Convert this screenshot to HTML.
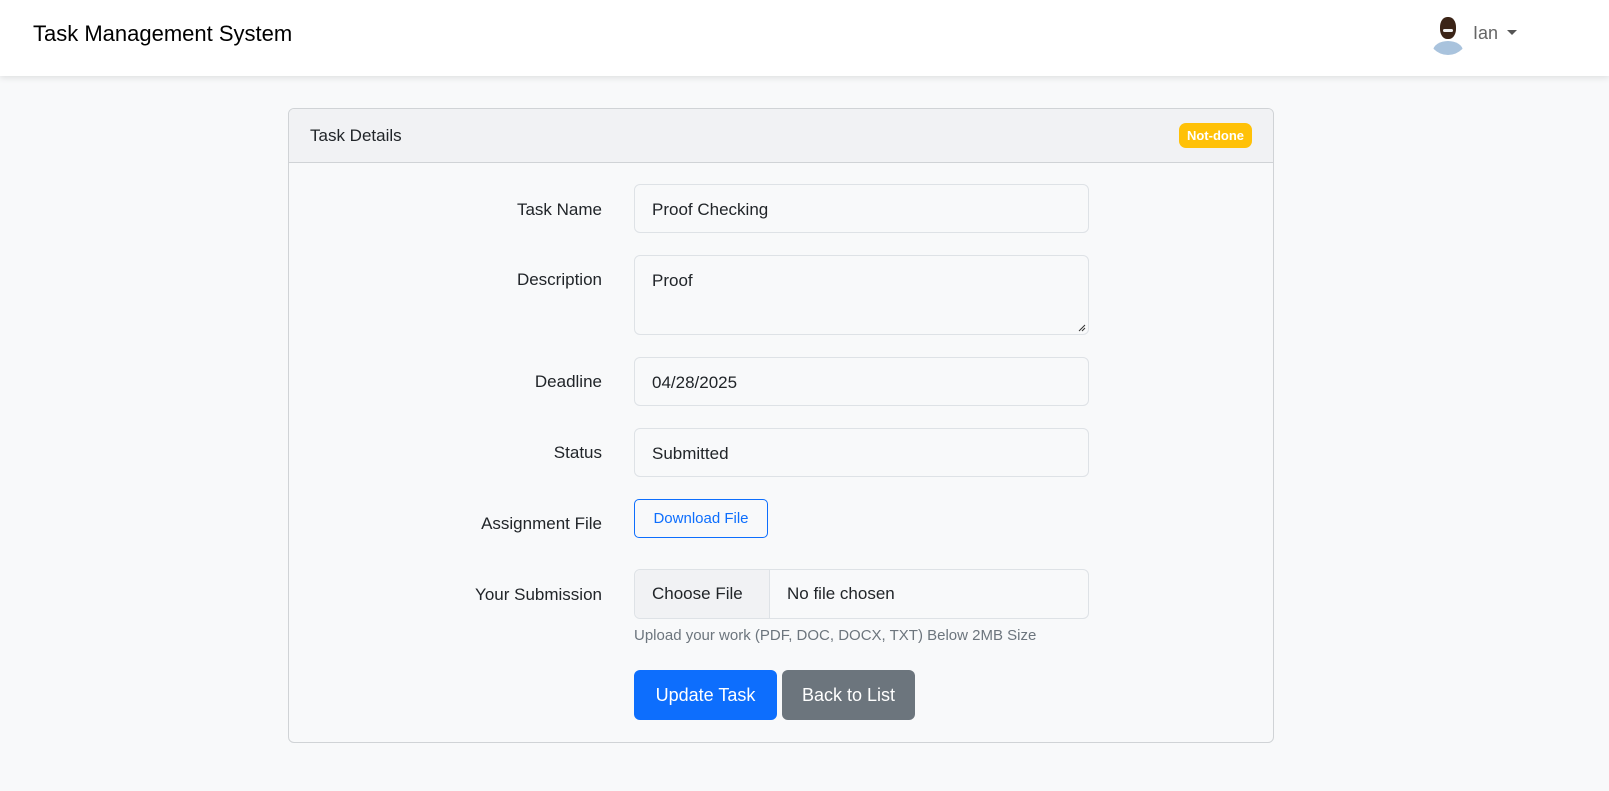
<!DOCTYPE html>
<html><head><style>
*{box-sizing:border-box;margin:0;padding:0}
body{width:1609px;height:791px;background:#f8f9fa;font-family:"Liberation Sans",sans-serif;color:#212529;position:relative;overflow:hidden}
.nav{position:absolute;left:0;top:0;width:1609px;height:76px;background:#fff;box-shadow:0 2px 6px rgba(0,0,0,.1)}
.brand{position:absolute;left:33px;top:21px;font-size:22px;color:#000}
.av{position:absolute;left:1428px;top:15px;width:40px;height:40px;border-radius:50%;overflow:hidden;background:#fff}
.av i{position:absolute;display:block}
.user{position:absolute;left:1473px;top:23px;font-size:18px;color:#666}
.caret{position:absolute;left:1507px;top:30px;border-left:5px solid transparent;border-right:5px solid transparent;border-top:5px solid #555}
.card{position:absolute;left:288px;top:108px;width:986px;height:635px;border:1px solid #d0d3d6;border-radius:6px;background:#f8f9fa;overflow:hidden}
.hd{height:54px;background:#f1f2f4;border-bottom:1px solid #d0d3d6;position:relative}
.hd span{position:absolute;left:21px;top:17px;font-size:17px}
.badge{position:absolute;right:21px;top:14px;background:#ffc107;color:#fff;font-weight:bold;font-size:13px;padding:5px 8px;border-radius:7px}
.lbl{position:absolute;right:1007px;font-size:17px;text-align:right;white-space:nowrap}
.in{position:absolute;left:634px;width:455px;border:1px solid #dee2e6;border-radius:6px;background:#f8f9fa;font-size:17px;padding:15px 17px}
.btn{position:absolute;border-radius:6px;font-size:18px;color:#fff;text-align:center}
</style></head><body>
<div class="nav"><div class="brand">Task Management System</div>
<div class="av"><i style="left:5px;top:26px;width:30px;height:20px;border-radius:50% 50% 0 0;background:#a9c3dd"></i><i style="left:12px;top:2px;width:16px;height:22px;border-radius:45%;background:#3b2417"></i><i style="left:15px;top:14px;width:10px;height:3px;background:#eee;border-radius:2px"></i></div>
<div class="user">Ian</div><div class="caret"></div></div>
<div class="card"><div class="hd"><span>Task Details</span><div class="badge">Not-done</div></div></div>
<div class="lbl" style="top:200px">Task Name</div>
<div class="in" style="top:184px;height:49px">Proof Checking</div>
<div class="lbl" style="top:270px">Description</div>
<div class="in" style="top:255px;height:80px">Proof<svg style="position:absolute;right:2px;bottom:2px" width="9" height="9"><path d="M8 2L2 8M8 5L5 8" stroke="#333" stroke-width="1"/></svg></div>
<div class="lbl" style="top:372px">Deadline</div>
<div class="in" style="top:357px;height:49px">04/28/2025</div>
<div class="lbl" style="top:443px">Status</div>
<div class="in" style="top:428px;height:49px">Submitted</div>
<div class="lbl" style="top:514px">Assignment File</div>
<div style="position:absolute;left:634px;top:499px;width:134px;height:39px;border:1px solid #0d6efd;border-radius:5px;color:#0d6efd;font-size:15px;text-align:center;line-height:37px">Download File</div>
<div class="lbl" style="top:585px">Your Submission</div>
<div class="in" style="top:569px;height:50px;padding:0"><span style="position:absolute;left:0;top:0;width:135px;height:48px;border-right:1px solid #dee2e6;background:#f1f2f4;line-height:48px;padding-left:17px;border-radius:6px 0 0 6px">Choose File</span><span style="position:absolute;left:152px;top:0;line-height:48px">No file chosen</span></div>
<div style="position:absolute;left:634px;top:627px;font-size:15px;color:#6c757d">Upload your work (PDF, DOC, DOCX, TXT) Below 2MB Size</div>
<div class="btn" style="left:634px;top:670px;width:143px;height:50px;line-height:50px;background:#0d6efd">Update Task</div>
<div class="btn" style="left:782px;top:670px;width:133px;height:50px;line-height:50px;background:#6c757d">Back to List</div>
</body></html>
